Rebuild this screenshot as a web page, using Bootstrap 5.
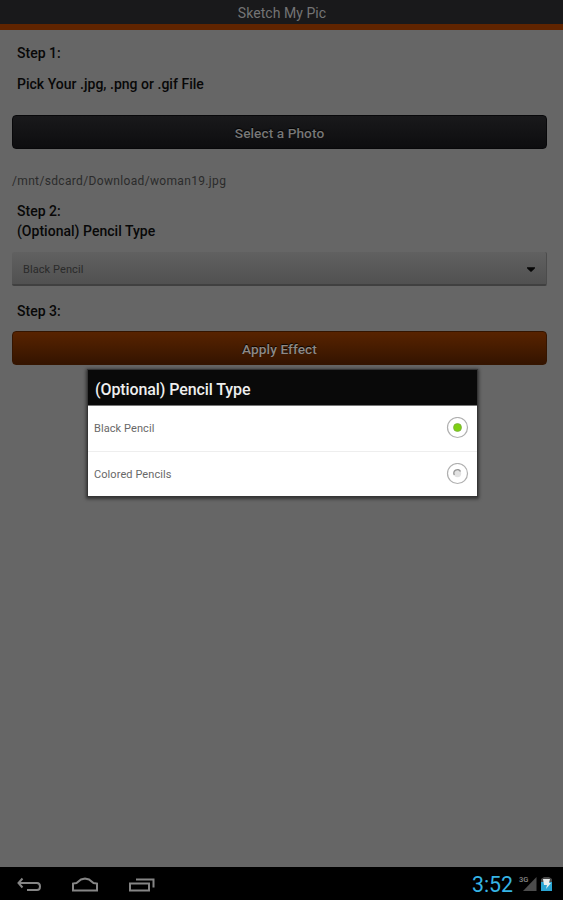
<!DOCTYPE html>
<html lang="en">
<head>
<meta charset="utf-8">
<meta name="viewport" content="width=device-width, initial-scale=1">
<title>Sketch My Pic</title>
<link href="https://cdn.jsdelivr.net/npm/bootstrap@5.3.0/dist/css/bootstrap.min.css" rel="stylesheet">
<style>
body{font-family:Roboto,"Liberation Sans",sans-serif;background:#666;color:#080808;font-size:14px;line-height:20px;overflow:hidden}
.app-title{height:24px;background:#19191b;color:#747475;letter-spacing:.05px;line-height:27px;font-size:14px;padding-left:1px}
.accent{height:6px;background:#602400}
.screen{padding:0 16px 0 12px}
.step{padding-left:5px;font-weight:500;letter-spacing:.02px}
.step-1{margin-top:13px}
.step-hint{margin-top:11px}
.step-2{margin-top:10px}
.step-3{margin-top:15px}
.action{height:34px;border-radius:4px;font-size:13.7px;font-weight:500;line-height:20px;padding:2px 0 0;text-shadow:0 -1px 1px #000;letter-spacing:.06px}
.action-dark,.action-dark:hover{margin-top:21px;background:linear-gradient(#19191b,#0d0d0f);border:1px solid #08080a;color:#777}
.action-apply,.action-apply:hover{margin-top:10px;background:linear-gradient(#582300,#341400);border:1px solid #351500;color:#8d8986}
.path{margin-top:22px;color:#2b2b2b;font-size:12px;letter-spacing:.34px}
.picker{height:34px;margin-top:11px;border-radius:2px;background:linear-gradient(#616161,#515151);border-right:1px solid #4c4c4c;border-bottom:2px solid #404040;color:#2a2a2a;font-size:11px;letter-spacing:.08px;padding:3px 11px 0 11px}
.dialog{left:87px;top:369px;width:391px;height:128px;border:1px solid #353535;box-shadow:0 1px 3px 1px #333;background:#fff}
.dialog-head{height:36px;background:#090909;color:#eee;font-size:16px;font-weight:500;letter-spacing:-.09px;padding:4px 7px 0;border-bottom:1px solid #777}
.choice{height:45px;color:#686868;font-size:11px;letter-spacing:.08px;padding:0 8px 0 6px}
.choice + .choice{border-top:1px solid #eee;height:46px}
.system-bar{height:33px;background:#000}
.clock{color:#36b4e5;font-size:21.3px;line-height:33px;padding-top:2px}
</style>
</head>
<body class="vh-100 d-flex flex-column position-relative">
<header>
  <div class="app-title text-center">Sketch My Pic</div>
  <div class="accent"></div>
</header>
<main class="screen flex-grow-1 d-flex flex-column">
  <div class="step step-1">Step 1:</div>
  <div class="step step-hint">Pick Your .jpg, .png or .gif File</div>
  <button class="btn action action-dark w-100" type="button">Select a Photo</button>
  <div class="path">/mnt/sdcard/Download/woman19.jpg</div>
  <div class="step step-2">Step 2:<br>(Optional) Pencil Type</div>
  <div class="picker d-flex align-items-center justify-content-between">
    <span>Black Pencil</span>
    <svg width="8" height="5" viewBox="0 0 9 5"><path d="M0 0h9v1L5 5H4L0 1z" fill="#060606"/></svg>
  </div>
  <div class="step step-3">Step 3:</div>
  <button class="btn action action-apply w-100" type="button">Apply Effect</button>
</main>
<footer class="system-bar d-flex align-items-center">
  <svg width="180" height="33" viewBox="0 0 180 33" fill="none" stroke="#858585" stroke-width="2">
    <path d="M22.500 11.500L18.500 16l4 4.500M19 16H37q3 0 3 3.500T37 23H27"/>
    <path d="M73 23.500v-7l3.500-.5L81 12.500 85 11.500l4 1 4.500 3.500 3.500.5v7z"/>
    <path d="M130 16.500h19v7h-19zM136 12.500h17.500v8"/>
  </svg>
  <span class="clock ms-auto">3:52</span>
  <svg class="ms-1" width="46" height="33" viewBox="0 0 46 33">
    <text x="2" y="15" font-family="Roboto, sans-serif" font-size="7.500" font-weight="500" fill="#888">3G</text>
    <path d="M19.500 10v14H6z" fill="#4c4c4c"/>
    <path d="M24 12l3-2h5l3 2v3H24z" fill="#484848"/>
    <path d="M24 15h11v9H24z" fill="#2ba5d3"/>
    <path d="M26 12h7l-1 4h2l-5 6 1-4h-3z" fill="#e8eeee"/>
  </svg>
</footer>
<section class="dialog position-absolute" role="dialog" aria-label="(Optional) Pencil Type">
  <div class="dialog-head d-flex align-items-center">(Optional) Pencil Type</div>
  <div class="choice d-flex align-items-center justify-content-between">
    <span>Black Pencil</span>
    <svg width="23" height="23" viewBox="0 0 23 23"><circle cx="11.500" cy="10.500" r="10" fill="#fff" stroke="#b0b0b0" stroke-width="1.200"/><circle cx="11.500" cy="10.500" r="4" fill="#7ed012" stroke="#78a744" stroke-width=".7"/></svg>
  </div>
  <div class="choice d-flex align-items-center justify-content-between">
    <span>Colored Pencils</span>
    <svg width="23" height="23" viewBox="0 0 23 23"><circle cx="11.500" cy="10.500" r="10" fill="#fff" stroke="#b0b0b0" stroke-width="1.200"/><circle cx="11.500" cy="10.500" r="3.700" fill="#e2e2e2"/><path d="M8.300 12a3.400 3.400 0 0 1 6.200-3.500" fill="none" stroke="#999" stroke-width="1.500"/></svg>
  </div>
</section>
<script src="https://cdn.jsdelivr.net/npm/bootstrap@5.3.0/dist/js/bootstrap.bundle.min.js"></script>
</body>
</html>
